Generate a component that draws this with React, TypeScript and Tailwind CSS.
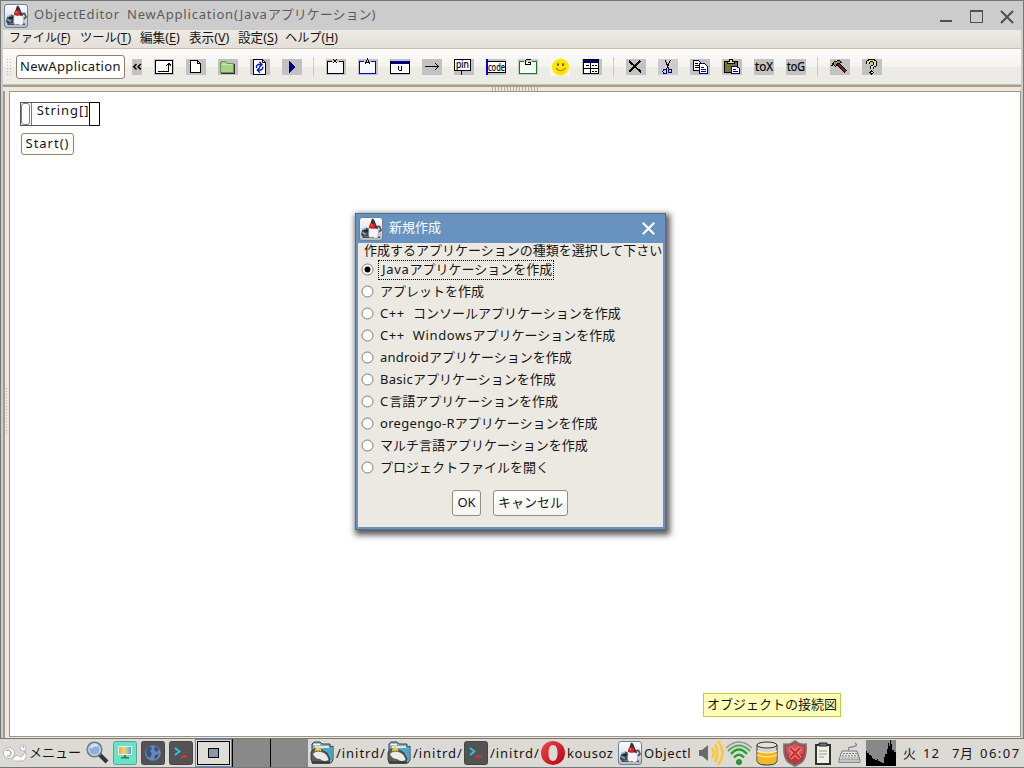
import React from 'react';

const Duke = () => (
  <svg width="24" height="24" viewBox="0 0 24 24" className="block shrink-0">
    <defs>
      <linearGradient id="dukeBg" x1="0" y1="0" x2="0" y2="1">
        <stop offset="0" stopColor="#fdfdfd" />
        <stop offset="0.5" stopColor="#e4e7eb" />
        <stop offset="1" stopColor="#aeb8c6" />
      </linearGradient>
    </defs>
    <rect x="0.5" y="0.5" width="23" height="23" rx="2.5" fill="url(#dukeBg)" stroke="#6b8299" />
    <path d="M3 19.5 H21 V21 H4Z" fill="#4a4d50" />
    <path d="M2 18 L3 13 L7 10.5 L11 12 L10 19 L4 20 Z" fill="#3f4c58" />
    <path d="M3 12.5 L7 11.5 M3.5 15.5 L7 17.5" stroke="#9cc4dd" strokeWidth="1.3" />
    <path d="M5 13.5 L9 14" stroke="#15181c" strokeWidth="1.6" />
    <path d="M17 10 L20.5 9.5 L22 13 L20 15" fill="none" stroke="#53585e" strokeWidth="1.8" />
    <path d="M10 10 L18 10 L19.5 15 L19 20.5 L16 21.5 L14 20 L11 21 L9.5 18 Z" fill="#f4f4f4" stroke="#8a8a8a" strokeWidth=".5" />
    <path d="M13 1.5 L15 2.5 L19 12 L16 11.5 L10 11 Z" fill="#303236" />
    <ellipse cx="13.3" cy="9" rx="3" ry="2.7" fill="#e01f1f" />
    <circle cx="12.6" cy="8.2" r=".8" fill="#f78a80" />
  </svg>
);

const Cell = ({ children, bg = '#c2c2c2' }: { children: React.ReactNode; bg?: string }) => (
  <svg width="20" height="16" viewBox="0 0 20 16" className="mr-3 block shrink-0 overflow-visible" shapeRendering="crispEdges" fill="none" stroke="#000">
    <rect width="20" height="16" fill={bg} stroke="none" />
    {children}
  </svg>
);

const Sep = ({ gap }: { gap: string }) => <div className={`h-5 w-px shrink-0 bg-[#cfc8bd] ${gap}`} />;

const Glyph = ({ x, y, s, w, children }: { x: number; y: number; s: number; w: number; children: string }) => (
  <text x={x} y={y} fontSize={s} textLength={w} lengthAdjust="spacingAndGlyphs" fill="#000" stroke="#000" strokeWidth=".2" fontFamily="'Noto Sans', sans-serif">{children}</text>
);

const Toolbar = () => (
  <div className="flex h-[35px] shrink-0 items-center bg-[linear-gradient(#fdfcfb_0%,#f5f3f0_50%,#ecebe6_52%,#eeebe7_100%)] pl-[3px]">
    <div className="h-[17px] w-[5px] shrink-0 bg-[radial-gradient(circle,#c3bbb0_0.7px,transparent_0.8px)] bg-[size:3px_3px]" />
    <div className="ml-[5px] flex h-6 w-[109px] shrink-0 items-center justify-center rounded-[3px] border border-[#8d7f70] bg-white pb-px tracking-[0.38px]">NewApplication</div>
    <svg width="10" height="16" className="ml-[7px] mr-3 block shrink-0" fill="none" stroke="#000" strokeWidth="1.5">
      <rect width="10" height="16" fill="#c2c2c2" stroke="none" />
      <path d="M4.5 5 L1.8 7.7 L4.5 10.4 M8.8 5 L6.1 7.7 L8.8 10.4" />
    </svg>
    <Cell><rect x="1.5" y="1.5" width="17" height="13" fill="#fff" /><path d="M4 12.5 H14.5 V4 M12 6.5 H13 M12.5 5.5 H16.5 M13.5 4.5 H15.5 M16 6.5 H17" /></Cell>
    <Cell><path d="M4.5 1.5 H11.5 L14.5 4.5 V13.5 H4.5 Z" fill="#fff" /><path d="M11.5 1.5 V4.5 H14.5" /></Cell>
    <Cell><path d="M2.5 4.5 V13.5 H15.5 V4.5 H9.5 L7.5 2.5 H3.5 Z" fill="#a9d487" stroke="#6c9453" /><path d="M3 14.5 H16.5 V5" stroke="#333" /><path d="M4 5.5 H14" stroke="#c5e6aa" /></Cell>
    <Cell bg="#c9bcbf"><path d="M3.5 .5 H12.5 L15.5 3.5 V15.5 H3.5 Z" fill="#fff" /><path d="M12.5 .5 V3.5 H15.5" /><path shapeRendering="auto" d="M6.5 9 V7 L8 5.5 H12 M9.3 2.8 L12 5.5 L9.3 8.2 M12.7 7.5 V9.5 L11.2 11 H7.5 M10 8.3 L7.3 11 L10 13.7" stroke="#0018d8" strokeWidth="1.3" /></Cell>
    <Cell><path d="M7.5 3 L12.5 8 L7.5 13 Z" fill="#000080" stroke="#000080" /></Cell>
    <Sep gap="-ml-px mr-3" />
    <Cell><path d="M6 2.5 H1.5 V14.5 H17.5 V2.5 H13" fill="#f8f8f8" /><path d="M7 0 L11 4 M11 0 L7 4" /></Cell>
    <Cell><path d="M6 2.5 H1.5 V14.5 H17.5 V2.5 H13" fill="#f8f8f8" stroke="#0000d0" /><path d="M7 4.5 L9.5 0 L12 4.5 M8 3 H11" /></Cell>
    <Cell><rect x=".5" y="2.5" width="19" height="12" fill="#fff" /><rect x="1" y="2" width="18" height="3" fill="#000080" stroke="none" /><path d="M8.5 7 V10.5 L9.5 11.5 H11.5 V7" /></Cell>
    <Cell><path d="M3 7.5 H17 M13 4 L16.5 7.5 L13 11" /></Cell>
    <Cell><rect x=".5" y=".5" width="16" height="11" fill="#fff" /><path d="M7.5 12 V16" /><Glyph x={2} y={9} s={11} w={13}>pin</Glyph></Cell>
    <Cell><rect x=".5" y="2.5" width="19" height="11" fill="#fff" /><rect width="2" height="16" fill="#0000ee" stroke="none" /><Glyph x={2} y={12} s={11} w={17}>code</Glyph></Cell>
    <Cell bg="#c6d0c6"><path d="M6 2.5 H1.5 V14.5 H18.5 V2.5 H14" fill="#f8fff8" stroke="#267326" /><path d="M12.5 .5 H8.5 L7.5 1.5 V5.5 H12.5 V3.5 H10" /></Cell>
    <svg width="20" height="18" className="mr-3 block shrink-0"><rect width="20" height="18" fill="#faf9f5" /><circle cx="10.5" cy="9" r="8.6" fill="#ffe600" /><path d="M6 10 Q10.5 15.5 15.5 10" fill="none" stroke="#a98800" strokeWidth="1.2" /><ellipse cx="8" cy="6.5" rx="1" ry="1.6" fill="#684c00" /><ellipse cx="13" cy="6.5" rx="1" ry="1.6" fill="#684c00" /></svg>
    <Cell><rect x="1.5" y=".5" width="15" height="14" fill="#fff" /><rect x="2" y="1" width="14" height="2" fill="#000080" stroke="none" /><path d="M2 3.5 H16 M2 9.5 H8 M4 6 H7" /><rect x="8.5" y="3.5" width="8" height="6" fill="#fff" /><rect x="8.5" y="9.5" width="8" height="5" fill="#fff" /><path d="M10 6 H15 M10 12 H15" strokeDasharray="2 1" /></Cell>
    <Sep gap="-ml-px mr-3" />
    <Cell><path d="M3 2 L15 13 M14 2 L3 13" strokeWidth="1.8" /></Cell>
    <Cell bg="#cccccf"><path d="M7 1 L11 10 M12.5 1 L8.5 10" /><circle cx="7" cy="12.5" r="2" stroke="#000080" /><circle cx="12" cy="12" r="2" stroke="#000080" /></Cell>
    <Cell><path d="M3.5 1.5 H8.5 L10.5 3.5 V11.5 H3.5 Z" fill="#fff" /><path d="M5 4.5 H8 M5 6.5 H9 M5 8.5 H9" /><path d="M9.5 4.5 H14.5 L17.5 7.5 V14.5 H9.5 Z" fill="#fff" stroke="#000080" /><path d="M11 8.5 H14 M11 10.5 H16 M11 12.5 H16" stroke="#000080" /></Cell>
    <Cell><path d="M2.5 2.5 H15.5 V13.5 H2.5 Z" fill="#777733" /><path d="M5.5 4.5 V2.5 H7.5 V.5 H10.5 V2.5 H12.5 V4.5 Z" fill="#e9e680" /><path d="M9.5 7.5 H14.5 L17.5 9.5 V14.5 H9.5 Z" fill="#fff" stroke="#000080" /><path d="M11 10.5 H14 M11 12.5 H16" stroke="#000080" /></Cell>
    <Cell><Glyph x={1} y={12} s={13} w={18}>toX</Glyph></Cell>
    <Cell><Glyph x={1} y={12} s={13} w={18}>toG</Glyph></Cell>
    <Sep gap="-ml-px mr-3" />
    <Cell><path d="M8 5 L16 13" stroke="#000" strokeWidth="4" /><path d="M8 5 L16 13" stroke="#761c1c" strokeWidth="2" /><path d="M1.5 6.5 L4.5 2.5 L9.5 1.5 L11.5 3.5 L8 4.5 L5.5 7.5 L3.5 5.5Z" fill="#9b8e4d" /></Cell>
    <Cell><path d="M6 5 V3 L8 1.5 H11 L13 3 V6 L10 8 V10" stroke="#000" strokeWidth="3.5" /><path d="M6 5 V3 L8 1.5 H11 L13 3 V6 L10 8 V10" stroke="#e8e878" strokeWidth="1.5" /><path d="M9.5 12 L11.5 13.5 L9.5 15 L8 13.5Z" fill="#e8e878" /></Cell>
  </div>
);

const menus = [
  { label: 'ファイル', key: 'F', w: 'w-[71px] text-[12px]' },
  { label: 'ツール', key: 'T', w: 'w-[60px] text-[12.3px]' },
  { label: '編集', key: 'E', w: 'w-[49px] text-[12.6px]' },
  { label: '表示', key: 'V', w: 'w-[49px] text-[12.6px]' },
  { label: '設定', key: 'S', w: 'w-[47px] text-[12.6px]' },
  { label: 'ヘルプ', key: 'H', w: 'w-[60px] text-[12.2px]' },
];

const options = [
  { latin: 'Java', label: 'アプリケーションを作成', t: 'ml-0.5 tracking-[0.7px]' },
  { latin: '', label: 'アプレットを作成', t: '' },
  { latin: 'C++ ', label: 'コンソールアプリケーションを作成', t: 'tracking-[0.5px] [word-spacing:4.6px]' },
  { latin: 'C++ Windows', label: 'アプリケーションを作成', t: 'tracking-[0.6px] [word-spacing:4px]' },
  { latin: 'android', label: 'アプリケーションを作成', t: 'tracking-[0.2px]' },
  { latin: 'Basic', label: 'アプリケーションを作成', t: 'tracking-[0.3px]' },
  { latin: 'C', label: '言語アプリケーションを作成', t: 'tracking-[1px]' },
  { latin: 'oregengo-R', label: 'アプリケーションを作成', t: 'tracking-[0.3px]' },
  { latin: '', label: 'マルチ言語アプリケーションを作成', t: '' },
  { latin: '', label: 'プロジェクトファイルを開く', t: '' },
];

const Dialog = () => (
  <div className="absolute left-[355px] top-[213px] flex h-[317px] w-[311px] flex-col border border-[#526f8e] bg-[#6893c0] px-0.5 pb-0.5 shadow-[2px_3px_6px_2px_rgba(0,0,0,0.65)]">
    <div className="flex h-[29px] shrink-0 items-center pl-px pr-2">
      <Duke />
      <span className="mb-[3px] ml-1.5 text-white">新規作成</span>
      <svg width="13" height="13" className="ml-auto block" stroke="#fff" strokeWidth="2.2"><path d="M.8 .8 L12.2 12.2 M12.2 .8 L.8 12.2" /></svg>
    </div>
    <div className="flex flex-1 flex-col bg-[#ece9e3]">
      <div className="h-4 whitespace-nowrap pl-[6px] leading-[14px]">作成するアプリケーションの種類を選択して下さい</div>
      {options.map((o, i) => (
        <div key={o.label + o.latin} className="flex h-[22px] items-center pl-[2.5px]">
          <svg width="13" height="13" className="mb-px block shrink-0"><circle cx="6.5" cy="6.5" r="5.5" fill="#fff" stroke="#82786e" />{i === 0 && <circle cx="6.5" cy="6.5" r="3" fill="#000" />}</svg>
          <div className={`ml-[4.5px] flex h-5 items-center whitespace-pre border border-dotted pb-[3px] pl-px ${i === 0 ? 'w-44 border-black' : 'border-transparent'}`}>
            <span className={o.t}>{o.latin}</span><span>{o.label}</span>
          </div>
        </div>
      ))}
      <div className="mt-[11px] flex gap-3 pl-[94px]">
        <div className="flex h-[26px] w-[29px] items-center justify-center rounded-[3px] border border-[#9a8c7f] bg-[linear-gradient(#fff_50%,#f7f6f4_51%)] pb-0.5">OK</div>
        <div className="flex h-[26px] w-[75px] items-center justify-center rounded-[3px] border border-[#9a8c7f] bg-[linear-gradient(#fff_50%,#f7f6f4_51%)] pb-[3px]">キャンセル</div>
      </div>
    </div>
  </div>
);

const Terminal = () => (
  <svg width="24" height="24" className="block shrink-0"><rect x=".5" y=".5" width="23" height="23" rx="2" fill="#535353" stroke="#474747" /><path d="M6 7 L10.5 10.5 L6 14" fill="none" stroke="#30c4e4" strokeWidth="1.8" /><path d="M12 15.5 H18" stroke="#f02f35" strokeWidth="2" /></svg>
);

const Folder = () => (
  <svg width="24" height="24" className="block shrink-0">
    <path d="M2 3 L4 1 H10 L12 3 H20 V6 L23 5 V19 L21 22 H2 Z" fill="#8fa9b4" stroke="#34434a" />
    <path d="M11 8 L22.5 5.5 V18 L17 21 Z" fill="#4aa7c6" />
    <path d="M3.5 3.5 H10 M5 6 H19" stroke="#f6fbfc" strokeWidth="1.6" />
    <path d="M1 11 L4 8 L12 9 L17 12 L20 18 L18 22 H3 L1 19Z" fill="#5a5f5e" stroke="#2b3234" strokeWidth=".8" />
    <path d="M3 13 Q5 10 11 11 Q17 12 18.5 19 Q14 21.5 10 18 Q5 18 3 13Z" fill="#ecebe6" />
    <path d="M5 10 L8.5 6.5 L11 10 M8 6 V10.5" stroke="#f1d43c" strokeWidth="1.5" fill="none" />
    <path d="M2 21.5 H20" stroke="#2c3a41" strokeWidth="2" />
  </svg>
);

const Opera = () => (
  <svg width="24" height="24" className="block shrink-0"><defs><linearGradient id="operaRed" x1="0" y1="0" x2="1" y2="1"><stop offset="0" stopColor="#f14747" /><stop offset="1" stopColor="#b70015" /></linearGradient></defs><path fillRule="evenodd" fill="url(#operaRed)" d="M12 0 A12 12 0 1 0 12 24 A12 12 0 1 0 12 0 M12 4 C15.5 4 16.5 8 16.5 12 C16.5 16 15.5 20 12 20 C8.5 20 7.5 16 7.5 12 C7.5 8 8.5 4 12 4" /></svg>
);

const Task = ({ icon, text, w, t }: { icon: React.ReactNode; text: string; w: string; t: string }) => (
  <div className={`flex shrink-0 items-center whitespace-nowrap ${w}`}>
    {icon}<span className={`ml-0.5 ${t}`}>{text}</span>
  </div>
);

const Tray = () => (
  <>
    <svg width="26" height="26" className="ml-[3px] block shrink-0"><path d="M1 10 H4 L10 5 V21 L4 16 H1Z" fill="#696969" /><g fill="none" stroke="#ffc629" strokeWidth="2.4"><path d="M14 8 Q18 13 14 18" /><path d="M17 4 Q22 13 17 22" /><path d="M20 1 Q29 13 20 25" /></g></svg>
    <svg width="28" height="26" className="ml-px block shrink-0" fill="none" stroke="#28a02e" strokeWidth="2.5"><path d="M1 8 Q14 -4 27 8" stroke="#8c9b8c" strokeWidth="1.4" /><path d="M3 11 Q14 0 25 11" stroke="#5aa55e" strokeWidth="1.8" /><path d="M6 14 Q14 5 22 14 M9 17.5 Q14 12 19 17.5" /><circle cx="14" cy="22" r="2.6" fill="#28a02e" stroke="#176d1c" strokeWidth=".7" /></svg>
    <svg width="22" height="25" className="ml-[3px] block shrink-0"><path d="M1 4 V20 Q2 24 11 24 Q20 24 21 20 V4" fill="#d7d6ce" stroke="#30302a" /><path d="M1.5 10 Q11 14 20.5 10 V20 Q19 23 11 23 Q2 23 1.5 20Z" fill="#f5b722" /><ellipse cx="11" cy="4" rx="10" ry="3" fill="#e4e2d8" stroke="#30302a" /><path d="M1 10 Q11 14 21 10 M1 14 Q11 18 21 14" fill="none" stroke="#fff3b0" /></svg>
    <svg width="26" height="27" className="ml-1 block shrink-0"><path d="M13 1 L16 3 Q20 5 24 4 Q25 17 20 22 L13 26 L6 22 Q1 17 2 4 Q7 5 10 3Z" fill="#b8393c" stroke="#777" strokeWidth="1.6" /><path d="M13 3 Q17 7 22 6 L21 14 H5 L4 6 Q9 7 13 3" fill="#dc8080" opacity=".45" /><path d="M8 8 L18 18 M18 8 L8 18" stroke="#f0c4c4" strokeWidth="4" /><path d="M8 8 L18 18 M18 8 L8 18" stroke="#d82c2c" strokeWidth="2.8" /></svg>
    <svg width="18" height="23" className="ml-1.5 block shrink-0"><rect x="2" y="3" width="14" height="19" fill="#f1f1e6" stroke="#30352d" strokeWidth="2" /><path d="M5 4 V1 H13 V4 Z" fill="#777" stroke="#252525" /><path d="M5 9 H13 M5 12 H13 M5 15 H10" stroke="#959b88" /></svg>
    <svg width="24" height="24" className="ml-1.5 block shrink-0" fill="none"><path d="M4 10 H19 L22 19 H1Z" fill="#e6e6e4" stroke="#777" /><path d="M1 19 V21.5 H22 V19" fill="#c4c4c2" stroke="#888" /><path d="M5 12.5 H19 M4 14.8 H20 M3.5 17 H21" stroke="#777" strokeDasharray="2 1" /><path d="M11 10 Q9 6 14 6 Q21 5 17 2" stroke="#888" strokeWidth="1.3" /></svg>
    <svg width="30" height="26" className="ml-1 block shrink-0" shapeRendering="crispEdges"><rect width="30" height="26" fill="#888" /><path d="M0 11 H1 V13 H3 V15 H5 V16 H6 V18 H7 V19 H9 V20 H11 V19 H12 V21 H14 V22 H16 V23 H18 V17 H19 V14 H21 V9 H22 V3 H23 V6 H24 V0 H25 V4 H26 V10 H28 V12 H30 V26 H0Z" fill="#000" /></svg>
  </>
);

const Taskbar = () => (
  <div className="flex h-[30px] shrink-0 items-center border-y border-[#777] bg-[#dcdad5] pl-[3px]">
    <svg width="24" height="20" className="block shrink-0"><g fill="#fff" stroke="#aaa" strokeWidth=".8"><circle cx="6" cy="10" r="5.5" /><circle cx="20" cy="5" r="3" /><path d="M10 15 L14 12 L18 14 L21 11 L22 8 Q25 15 20 18 H13 Q9 19 10 15" /></g><path d="M3 8 Q7 5 8 10 Q8 14 4 13 M20 3 L21 5" fill="none" stroke="#888" /></svg>
    <span className="mb-0.5 ml-0.5 w-[57px] shrink-0">メニュー</span>
    <svg width="24" height="24" className="block shrink-0"><path d="M13 13 L21 21" stroke="#353535" strokeWidth="4" /><circle cx="8.5" cy="8.5" r="7.3" fill="#91afd7" stroke="#707b87" strokeWidth="1.6" /><circle cx="8.5" cy="8.5" r="5.7" fill="none" stroke="#e1e9f5" /><path d="M5 7 Q7 3 11 5" fill="none" stroke="#fff" strokeWidth="2" opacity=".7" /></svg>
    <svg width="24" height="24" className="ml-[3px] block shrink-0"><defs><linearGradient id="screen"><stop stopColor="#f48b70" /><stop offset=".35" stopColor="#fbd35d" /><stop offset=".65" stopColor="#a8d49d" /><stop offset="1" stopColor="#678ed0" /></linearGradient></defs><rect x=".5" y=".5" width="23" height="23" rx="2" fill="#66e3ca" stroke="#61a393" /><rect x="5.5" y="5.5" width="13" height="8" fill="url(#screen)" stroke="#f6efdf" /><path d="M11 14 H13 V16 H16 V17.5 H8 V16 H11Z" fill="#4d706c" /></svg>
    <svg width="24" height="24" className="ml-1 block shrink-0"><rect x=".5" y=".5" width="23" height="23" rx="2" fill="#535353" stroke="#474747" /><circle cx="12" cy="12" r="7.8" fill="#6d87b4" /><path d="M6 7 L9 5 L11 8 L9 10 L11 13 L9 17 L6 15 L5 11Z M14 5 L18 8 L16 11 L13 9Z M14 14 L18 13 L16 17 L13 18Z" fill="#34538a" /></svg>
    <div className="ml-1"><Terminal /></div>
    <div className="ml-0.5 flex h-7 shrink-0">
      <div className="flex w-[37px] border-[1px] border-[#5a8cc4] p-px"><div className="flex flex-1 items-center justify-center border border-black bg-[#dfddd8]"><div className="h-[10px] w-[11px] border border-black bg-[#8598aa]" /></div></div>
      <div className="w-[38px] border-l border-black bg-[#898989]" />
      <div className="w-[38px] border-l border-black bg-[#898989]" />
    </div>
    <div className="ml-0.5 flex shrink-0">
      <Task icon={<Folder />} text="/initrd/" w="w-[77px]" t="tracking-[0.95px]" />
      <Task icon={<Folder />} text="/initrd/" w="w-[77px]" t="tracking-[0.95px]" />
      <Task icon={<Terminal />} text="/initrd/" w="w-[77px]" t="tracking-[0.95px]" />
      <Task icon={<Opera />} text="kousoz" w="w-[77px]" t="tracking-[0.6px]" />
      <Task icon={<Duke />} text="Objectl" w="w-[77px]" t="tracking-[0.6px]" />
    </div>
    <Tray />
    <div className="mb-px ml-[7px] flex whitespace-pre"><span className="w-5">火</span><span className="w-[29px] tracking-[1px]">12</span><span className="w-7 tracking-[0.5px]">7月</span><span className="tracking-[1.5px]">06:07</span></div>
  </div>
);

export default function App() {
  return (
    <div className="relative flex h-[768px] w-[1024px] flex-col overflow-hidden bg-[#ccc] font-['Noto_Sans','Noto_Sans_CJK_JP',sans-serif] text-[13px] leading-[18px] text-[#151515]">
      <div className="flex h-[738px] flex-col border-x border-t border-[#777] pl-0.5 pr-0.5">
        <div className="flex h-[29px] shrink-0 items-center pl-px text-[#5b5b5b]">
          <Duke />
          <span className="mb-[3px] ml-1.5 whitespace-nowrap"><span className="tracking-[0.8px] [word-spacing:3px]">ObjectEditor NewApplication(Java</span>アプリケーション)</span>
          <svg width="74" height="15" className="ml-auto mr-[7px] mt-px block" fill="none" stroke="#505050" shapeRendering="crispEdges"><path d="M0 12 H12" strokeWidth="2" /><rect x="30.5" y="1.5" width="12" height="12" /><path d="M30 2 H43" strokeWidth="2" /><path d="M61 2 L73 14 M73 2 L61 14" strokeWidth="2" shapeRendering="auto" /></svg>
        </div>
        <div className="flex h-[19px] shrink-0 items-center border-b border-[#cbbbaa] bg-[linear-gradient(#eeeae5,#e4dfd8)] pb-0.5 pl-1.5">
          {menus.map((m) => <div key={m.label} className={`shrink-0 whitespace-nowrap ${m.w}`}>{m.label}(<span className="underline underline-offset-2">{m.key}</span>)</div>)}
        </div>
        <Toolbar />
        <div className="h-[3px] shrink-0 border-b-2 border-t border-b-[#a99d88] border-t-[#cabfb0] bg-[#a99d88]" />
        <div className="flex h-1 shrink-0 justify-center bg-[#ece8e1] pl-[6px]">
          <div className="h-1 w-12 bg-[radial-gradient(circle,#b5ada2_0.7px,transparent_0.8px)] bg-[size:3px_2px]" />
        </div>
        <div className="flex min-h-0 flex-1 bg-[#ece8e1]">
          <div className="flex w-1.5 shrink-0 items-center border-l-2 border-[#a99988]">
            <div className="-mt-2 h-12 w-1 bg-[radial-gradient(circle,#b5ada2_0.7px,transparent_0.8px)] bg-[size:3px_3px]" />
          </div>
          <div className="mb-px min-w-0 flex-1 border border-[#9f9585] bg-white pl-2.5 pt-[10px]">
            <div className="flex h-6 w-20 border border-y-[#555] border-l-[#555] border-r-black">
              <div className="w-[9px] rounded-[3px] border border-[#8d7f70] bg-white" />
              <div className="ml-px flex-1 whitespace-nowrap border-l border-[#777] pl-[5px] leading-[15px] tracking-[0.95px]">String[]</div>
              <div className="-my-px w-2.5 border-y border-l border-black" />
            </div>
            <div className="ml-px mt-[7px] flex h-[22px] w-[53px] items-center justify-center rounded-[3px] border border-[#8d7f70] pb-0.5 tracking-[1px]">Start()</div>
          </div>
        </div>
      </div>
      <Taskbar />
      <Dialog />
      <div className="absolute left-[703px] top-[693px] flex h-6 w-[138px] items-center justify-center whitespace-nowrap border border-[#cbc93b] bg-[#ffffb8] pb-[3px]">オブジェクトの接続図</div>
    </div>
  );
}
